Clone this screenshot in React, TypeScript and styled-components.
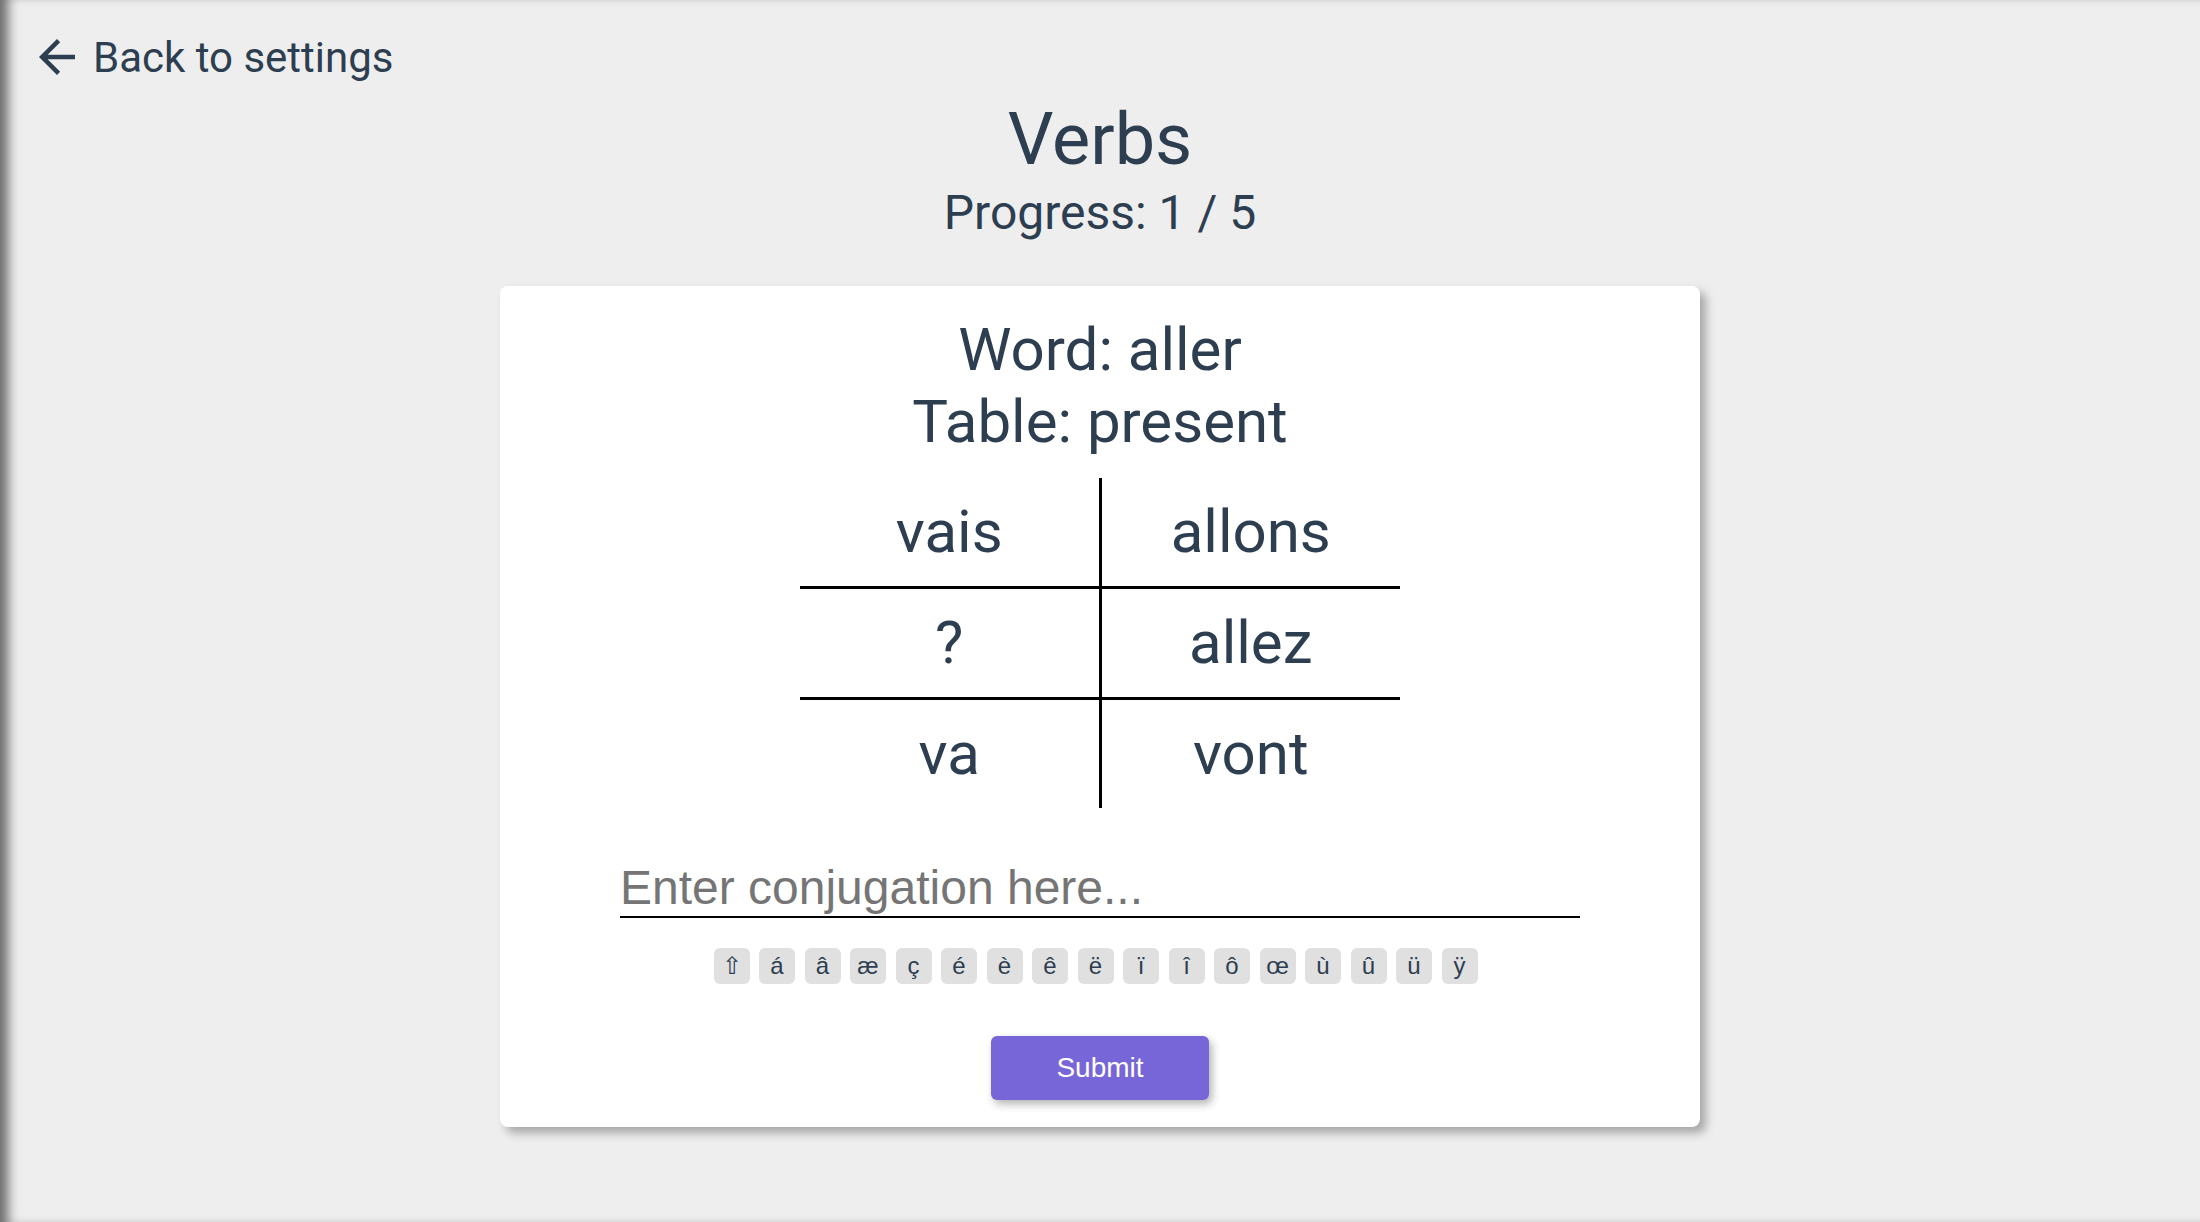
import React from "react";
import styled, { createGlobalStyle } from "styled-components";
import { MdArrowBack } from "react-icons/md";

const GlobalStyle = createGlobalStyle`
  html, body {
    margin: 0;
    padding: 0;
    background: #eeeeee;
  }
  body {
    font-family: Roboto, "Liberation Sans", Arial, sans-serif;
    color: #2c3e50;
  }
  * { box-sizing: border-box; }
`;

const Page = styled.div`
  min-height: 100vh;
  background: #eeeeee;
  box-shadow: inset 14px 0 12px -6px rgba(0, 0, 0, 0.55);
  padding: 30px 0 40px 0;
  display: flex;
  flex-direction: column;
`;

const BackLink = styled.a`
  display: flex;
  align-items: center;
  gap: 9px;
  align-self: flex-start;
  margin-left: 30px;
  height: 54px;
  color: #2c3e50;
  text-decoration: none;
  font-family: Roboto, sans-serif;
  font-size: 42px;
  line-height: 49px;
  cursor: pointer;
`;

const Title = styled.h1`
  margin: 14px 0 0 0;
  text-align: center;
  font-family: Roboto, sans-serif;
  font-weight: 400;
  font-size: 72px;
  line-height: 84px;
  color: #2c3e50;
`;

const Progress = styled.div`
  margin-top: 3px;
  text-align: center;
  font-family: Roboto, sans-serif;
  font-size: 48px;
  line-height: 56px;
  color: #2c3e50;
`;

const Card = styled.section`
  width: 1200px;
  margin: 45px auto 0 auto;
  background: #ffffff;
  border-radius: 8px;
  box-shadow: 6px 6px 10px rgba(0, 0, 0, 0.3);
  padding: 28px 0 27px 0;
  display: flex;
  flex-direction: column;
  align-items: center;
`;

const Prompt = styled.h2`
  margin: 0;
  text-align: center;
  font-family: Roboto, sans-serif;
  font-weight: 400;
  font-size: 60px;
  line-height: 72px;
  color: #2c3e50;
`;

const ConjTable = styled.table`
  margin-top: 20px;
  width: 600px;
  border-collapse: collapse;
  table-layout: fixed;
`;

const Cell = styled.td<{ $left?: boolean; $last?: boolean }>`
  width: 50%;
  text-align: center;
  font-family: Roboto, sans-serif;
  font-size: 60px;
  line-height: 72px;
  padding: 18px 0;
  color: #2c3e50;
  border-right: ${(p) => (p.$left ? "3px solid #000" : "none")};
  border-bottom: ${(p) => (p.$last ? "none" : "3px solid #000")};
`;

const Input = styled.input`
  margin-top: 51px;
  width: 960px;
  font-family: "Liberation Sans", Arial, sans-serif;
  font-size: 48px;
  line-height: 55px;
  height: 59px;
  padding: 1px 0;
  border: none;
  border-bottom: 2px solid #000;
  background: transparent;
  color: #2c3e50;
  outline: none;
  &::placeholder {
    color: #757575;
  }
`;

const KeyRow = styled.div`
  margin-top: 30px;
  margin-right: 9px;
  display: flex;
  gap: 9.5px;
  justify-content: center;
`;

const Key = styled.button`
  width: 36px;
  height: 36px;
  border: none;
  border-radius: 6px;
  background: #e0e0e0;
  color: #2c3e50;
  font-family: "Liberation Sans Narrow", "Arial Narrow", "Liberation Sans", sans-serif;
  font-size: 24px;
  padding: 0;
  display: flex;
  align-items: center;
  justify-content: center;
  cursor: pointer;
`;

const Submit = styled.button`
  margin-top: 52px;
  width: 218px;
  height: 64px;
  border: none;
  border-radius: 6px;
  background: #7766d7;
  color: #ffffff;
  font-family: "Liberation Sans", Arial, sans-serif;
  font-size: 28px;
  box-shadow: 3px 4px 8px rgba(0, 0, 0, 0.3);
  cursor: pointer;
`;

const rows: [string, string][] = [
  ["vais", "allons"],
  ["?", "allez"],
  ["va", "vont"],
];

const keys = ["⇧", "á", "â", "æ", "ç", "é", "è", "ê", "ë", "ï", "î", "ô", "œ", "ù", "û", "ü", "ÿ"];

export default function App() {
  return (
    <>
      <GlobalStyle />
      <Page>
        <BackLink>
          <MdArrowBack size={54} />
          <span>Back to settings</span>
        </BackLink>
        <Title>Verbs</Title>
        <Progress>Progress: 1 / 5</Progress>
        <Card>
          <Prompt>
            Word: aller
            <br />
            Table: present
          </Prompt>
          <ConjTable>
            <tbody>
              {rows.map((r, i) => (
                <tr key={i}>
                  <Cell $left $last={i === rows.length - 1}>{r[0]}</Cell>
                  <Cell $last={i === rows.length - 1}>{r[1]}</Cell>
                </tr>
              ))}
            </tbody>
          </ConjTable>
          <Input placeholder="Enter conjugation here..." />
          <KeyRow>
            {keys.map((k) => (
              <Key key={k}>{k}</Key>
            ))}
          </KeyRow>
          <Submit>Submit</Submit>
        </Card>
      </Page>
    </>
  );
}
